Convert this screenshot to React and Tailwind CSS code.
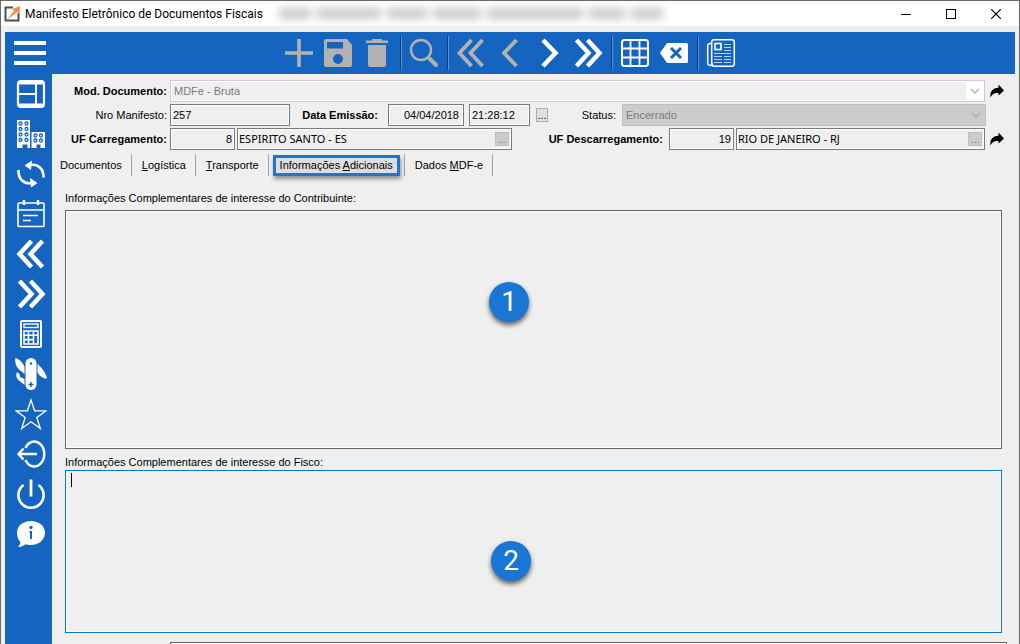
import { useState } from "react";
import clsx from "clsx";

const Icon = ({ children, className = "size-8" }) => (
  <svg viewBox="0 0 32 32" className={className} fill="none" stroke="currentColor" aria-hidden="true">
    {children}
  </svg>
);

const chevrons = {
  first: "M16.5 3 4.5 16l12 13M27.5 3l-12 13 12 13",
  prev: "M22.5 3 10 16l12.500 13",
  next: "M10 3l12.500 13L10 29",
  last: "M4.500 3l12 13-12 13M15.500 3l12 13-12 13",
};

const Chevron = ({ dir, width = 4.5 }) => (
  <Icon>
    <path d={chevrons[dir]} strokeWidth={width} />
  </Icon>
);

const toolbar = [
  {
    name: "Novo",
    off: true,
    icon: (
      <Icon>
        <path d="M16 2v28M2 16h28" strokeWidth="3.6" />
      </Icon>
    ),
  },
  {
    name: "Salvar",
    off: true,
    icon: (
      <Icon>
        <path
          d="M4 2h21l5 6v20a2 2 0 0 1-2 2H4a2 2 0 0 1-2-2V4a2 2 0 0 1 2-2zM5 5v6.500h16V5zM16 17a5 5 0 1 0 0 10 5 5 0 0 0 0-10z"
          fill="currentColor"
          fillRule="evenodd"
          stroke="none"
        />
      </Icon>
    ),
  },
  {
    name: "Excluir",
    off: true,
    icon: (
      <Icon>
        <path
          d="M11 2h10v1.500h6V6H5V3.500h6zM7 8h18v19.500a2.500 2.500 0 0 1-2.500 2.500h-13A2.500 2.500 0 0 1 7 27.500z"
          fill="currentColor"
          stroke="none"
        />
      </Icon>
    ),
  },
  null,
  {
    name: "Pesquisar",
    off: true,
    icon: (
      <Icon>
        <circle cx="13" cy="13" r="10" strokeWidth="2.4" />
        <path d="M20 20l2 2" strokeWidth="2.400" />
        <path d="M22 22l6 6" strokeWidth="4" strokeLinecap="round" />
      </Icon>
    ),
  },
  null,
  { name: "Primeiro", off: true, icon: <Chevron dir="first" width={3.8} /> },
  { name: "Anterior", off: true, icon: <Chevron dir="prev" width={3.8} /> },
  { name: "Próximo", icon: <Chevron dir="next" /> },
  { name: "Último", icon: <Chevron dir="last" /> },
  null,
  {
    name: "Grade",
    icon: (
      <Icon>
        <rect x="3" y="3" width="26" height="26" rx="2.500" strokeWidth="2" />
        <path d="M11.500 3v26M20.500 3v26M3 11.500h26M3 20.500h26" strokeWidth="1.800" />
      </Icon>
    ),
  },
  {
    name: "Limpar",
    icon: (
      <Icon>
        <path
          d="M10 6h18.500A1.500 1.500 0 0 1 30 7.500v17a1.500 1.500 0 0 1-1.500 1.500H10a2 2 0 0 1-1.500-.7L2 16l6.500-9.300A2 2 0 0 1 10 6z"
          fill="currentColor"
          stroke="none"
        />
        <path d="M13 11l10 10M23 11L13 21" stroke="#1565c0" strokeWidth="3" />
      </Icon>
    ),
  },
  null,
  {
    name: "Notícias",
    icon: (
      <Icon>
        <rect x="6.700" y="2.700" width="22.600" height="26.600" rx="2.500" strokeWidth="1.500" />
        <path d="M6.700 6.500H5A2.300 2.300 0 0 0 2.700 9v17.500a2.600 2.600 0 0 0 5 0" strokeWidth="1.500" />
        <rect x="10" y="6.500" width="6" height="6" strokeWidth="1.600" />
        <path
          d="M19 7.500h7M19 10.500h7M19 13.500h7M9 16.500h17M9 19.500h8M19 19.500h7M9 22.500h8M19 22.500h7M9 25.500h8M19 25.500h7"
          strokeWidth="1"
          opacity=".7"
        />
      </Icon>
    ),
  },
];

const sidebar = [
  {
    name: "Painel",
    icon: (
      <Icon>
        <rect x="3" y="3" width="26" height="26" rx="3" strokeWidth="2.200" />
        <path d="M21 5v22M4 16h17" strokeWidth="2" />
        <path d="M3 5h26" strokeWidth="3" />
        <path d="M4 27h24" strokeWidth="3" />
      </Icon>
    ),
  },
  {
    name: "Empresas",
    icon: (
      <Icon>
        <path
          d="M2 2h13v28h-2.500v-3.500h-5V30H2zM16.500 14H30v16h-4.500v-3.500h-4V30h-5z"
          fill="currentColor"
          stroke="none"
        />
        <g stroke="#1565c0" strokeWidth="1.300">
          {[5.5, 11, 16.5, 22].map((y) => (
            <g key={y}>
              <circle cx="5.500" cy={y} r="1.500" />
              <circle cx="11.500" cy={y} r="1.500" />
            </g>
          ))}
          {[17.5, 22.5].map((y) => (
            <g key={y}>
              <circle cx="20.500" cy={y} r="1.500" />
              <circle cx="26" cy={y} r="1.500" />
            </g>
          ))}
        </g>
      </Icon>
    ),
  },
  {
    name: "Atualizar",
    icon: (
      <Icon>
        <path d="M15 7C23 5.500 29 11 28.500 19.500M17 25C9 26.500 3 21 3.500 12" strokeWidth="2.600" />
        <path d="M9.500 7.500 17 2.500 16 12zM22.500 25 15 20l1 9.500z" fill="currentColor" stroke="none" />
      </Icon>
    ),
  },
  {
    name: "Agenda",
    icon: (
      <Icon>
        <rect x="3" y="5" width="26" height="23.500" rx="1" strokeWidth="1.600" />
        <path d="M3 12h26" strokeWidth="1.500" />
        <path d="M9 2v5M23 2v5" strokeWidth="2.400" />
        <path d="M8 17.500h15M8 22.500h8" strokeWidth="1.700" />
      </Icon>
    ),
  },
  { name: "Recuar", icon: <Chevron dir="first" /> },
  { name: "Avançar", icon: <Chevron dir="last" /> },
  {
    name: "Calculadora",
    icon: (
      <Icon>
        <rect x="6" y="3" width="20" height="26" rx="1" strokeWidth="2" />
        <rect x="9" y="6" width="14" height="3.500" strokeWidth="1.400" />
        <path d="M9 13h14v13H9zM13.500 13v13M18.500 13v13M9 17.300h14M9 21.600h9.500" strokeWidth="1.600" />
      </Icon>
    ),
  },
  {
    name: "Ferramentas",
    icon: (
      <Icon>
        <path
          d="M16 0a5.500 5.500 0 0 1 5.500 5.500v21a5.500 5.500 0 0 1-11 0v-21A5.500 5.500 0 0 1 16 0z"
          fill="currentColor"
          stroke="none"
        />
        <path
          d="M.5 0C4 1 8 4.500 9.500 9v7L4 11.500C1 8.500-.5 4 .5 0zM2 14l2.500 2 .5 3 4.500 2v6L4 22.500C1.500 20.500.5 17 2 14zM22.500 6c3.500 3 8.500 8.500 9.500 14.500-4 0-7-2-9.500-6z"
          fill="currentColor"
          stroke="none"
        />
        <circle cx="16" cy="5.500" r="1.200" fill="#1565c0" stroke="none" />
        <path d="M16 24v5M13.500 26.500h5" stroke="#1565c0" strokeWidth="1.500" />
      </Icon>
    ),
  },
  {
    name: "Favoritos",
    icon: (
      <Icon>
        <path d="M16 2l3.600 10.800H31L21.800 19.500 25.300 30.500 16 23.800 6.700 30.500l3.500-11L1 12.800h11.400z" strokeWidth="1.300" />
      </Icon>
    ),
  },
  {
    name: "Sair",
    icon: (
      <Icon>
        <path d="M10.500 10A10 12.500 0 1 1 10.500 22" strokeWidth="2.400" />
        <path d="M22 16H3.500M8.500 10.500 3.500 16l5 5.500" strokeWidth="2.400" />
      </Icon>
    ),
  },
  {
    name: "Desligar",
    icon: (
      <Icon>
        <path d="M8.500 7a12.600 12.600 0 1 0 15 0" strokeWidth="2.600" />
        <path d="M16 1.500v17" strokeWidth="2.800" />
      </Icon>
    ),
  },
  {
    name: "Informações",
    icon: (
      <Icon>
        <path
          d="M16 3c8 0 14 5 14 11.700S24 27 16 27c-2.300 0-4-.3-5.500-.8C8.500 27.800 6 29 3 29c1.500-1.500 2.500-3.500 2.300-5C3.200 21.500 2 18.500 2 14.700 2 8 8 3 16 3z"
          fill="currentColor"
          stroke="none"
        />
        <circle cx="16" cy="9.500" r="1.700" fill="#1565c0" stroke="none" />
        <path d="M14.500 14H16v7" stroke="#1565c0" strokeWidth="2" />
      </Icon>
    ),
  },
];

const tabs = [
  { id: "documentos", label: "Documentos" },
  { id: "logistica", label: <><u>L</u>ogística</> },
  { id: "transporte", label: <><u>T</u>ransporte</> },
  { id: "adicionais", label: <>Informações <u>A</u>dicionais</> },
  { id: "dados", label: <>Dados <u>M</u>DF-e</> },
];

// widths of the blurred words after the window title
const hidden = ["w-8", "w-16", "w-10", "w-12", "w-24", "w-9", "w-8"];

const fieldBase =
  "h-[22px] border border-[#7a7a7a] bg-[#efefef] shadow-[inset_0_0_0_1px_#fff] outline-none";

const Field = ({ id, label, value, className }) => (
  <input
    id={id}
    aria-label={label}
    defaultValue={value}
    className={clsx(fieldBase, "min-w-0 px-[2px]", className)}
  />
);

const Label = ({ htmlFor, bold, className, children }) => (
  <label
    htmlFor={htmlFor}
    className={clsx("shrink-0 whitespace-nowrap text-right", bold && "font-bold", className)}
  >
    {children}
  </label>
);

const Lookup = ({ id, label, value, className }) => (
  <div className={clsx(fieldBase, "flex min-w-0 items-center justify-between pr-[2px]", className)}>
    <input
      id={id}
      aria-label={label}
      defaultValue={value}
      className="w-full min-w-0 bg-transparent pl-px font-[Tahoma,'Noto_Sans',sans-serif] outline-none"
    />
    <button
      type="button"
      aria-label={`Buscar ${label}`}
      className="flex size-[14px] shrink-0 items-end justify-center border border-[#bfbfbf] bg-[#ccc] leading-[12px] text-gray-500"
    >
      ...
    </button>
  </div>
);

const SelectArrow = ({ className }) => (
  <span
    className={clsx("pointer-events-none absolute inset-y-px right-px flex w-[18px] items-center justify-center", className)}
  >
    <svg viewBox="0 0 10 6" className="h-[6px] w-[10px]" fill="none" stroke="#a9a9a9" aria-hidden="true">
      <path d="M1 1l4 4 4-4" strokeWidth="1.200" />
    </svg>
  </span>
);

const ShareLink = ({ label }) => (
  <a href="#abrir" aria-label={label} className="ml-[5px] w-[14px] shrink-0 text-black">
    <svg viewBox="0 0 14 14" className="size-[14px]" fill="currentColor" aria-hidden="true">
      <path d="M8.500 0.500 14 6.500 8.500 11.500V9C4.500 8.500 2 10 .5 13.500-.5 7.500 3 4 8.500 3.800z" />
    </svg>
  </a>
);

const Badge = ({ className, children }) => (
  <span
    className={clsx(
      "pointer-events-none absolute flex size-10 items-center justify-center rounded-full bg-[#1976d2] font-[Roboto,sans-serif] text-[28px] leading-none text-white shadow-[0_3px_5px_rgba(0,0,0,0.6)]",
      className
    )}
  >
    {children}
  </span>
);

const textArea =
  "block w-full resize-none border bg-[#efefef] px-[5px] py-[2px] shadow-[inset_0_0_0_1px_#fff] outline-none";

export default function App() {
  const [active, setActive] = useState("adicionais");

  return (
    <div className="flex h-screen flex-col overflow-hidden border-x border-t border-[#696969] bg-[#efefef] font-['Liberation_Sans',Arial,sans-serif] text-[11px] leading-[14px] text-black">
      {/* Title bar */}
      <header className="flex h-[25px] shrink-0 items-center bg-white pl-[3px]">
        <svg viewBox="0 0 16 16" className="size-4" fill="none" aria-hidden="true">
          <path d="M9 1.500H1.500v13h13V7" stroke="#505050" strokeWidth="2" />
          <path d="M2.500 14 10 5 8.500 3 16 0l-.5 7.500L13.500 6z" fill="#f58d45" />
        </svg>
        <h1 className="ml-[5px] whitespace-nowrap font-['Segoe_UI',Roboto,sans-serif] text-[12px] leading-4">
          Manifesto Eletrônico de Documentos Fiscais
        </h1>
        <div className="ml-4 flex flex-1 gap-[6px] blur-[4px]" aria-hidden="true">
          {hidden.map((w, i) => (
            <span key={i} className={clsx("h-[11px] shrink-0 bg-[#ccc9cb]", w)} />
          ))}
        </div>
        <button type="button" aria-label="Minimizar" className="flex w-[45px] justify-center">
          <svg viewBox="0 0 10 10" className="size-[10px]" stroke="#000" fill="none">
            <path d="M0 5.500h10" />
          </svg>
        </button>
        <button type="button" aria-label="Maximizar" className="flex w-[45px] justify-center">
          <svg viewBox="0 0 10 10" className="size-[10px]" stroke="#000" fill="none">
            <rect x=".5" y=".5" width="9" height="9" />
          </svg>
        </button>
        <button type="button" aria-label="Fechar" className="flex w-[46px] justify-center">
          <svg viewBox="0 0 10 10" className="size-[10px]" stroke="#000" fill="none">
            <path d="M0 0l10 10M10 0 0 10" strokeWidth="1.200" />
          </svg>
        </button>
      </header>

      {/* Toolbar */}
      <div className="mx-1 mt-[6px] flex h-[42px] shrink-0 items-center bg-[#1565c0] px-[9px] text-white">
        <div className="flex-1">
          <button type="button" aria-label="Menu" className="flex w-8 flex-col gap-[6px]">
            <span className="h-1 w-full bg-white" />
            <span className="h-1 w-full bg-white" />
            <span className="h-1 w-full bg-white" />
          </button>
        </div>
        <div className="flex items-center">
          {toolbar.map((tool, i) =>
            tool ? (
              <button
                key={i}
                type="button"
                aria-label={tool.name}
                className={clsx("flex w-[39px] justify-center", tool.off && "text-[#b2b2b2]")}
              >
                {tool.icon}
              </button>
            ) : (
              <span key={i} className="mx-[3px] h-[34px] w-[2px] border-l border-r border-l-[#0c3c73] border-r-[#5b93d3]" />
            )
          )}
        </div>
        <div className="flex-1" />
      </div>

      <div className="flex min-h-0 flex-1">
        <nav className="ml-1 w-[47px] shrink-0 bg-[#1565c0] text-white">
          {sidebar.map((item) => (
            <button
              key={item.name}
              type="button"
              aria-label={item.name}
              className="flex h-10 w-full items-center pl-[10px]"
            >
              {item.icon}
            </button>
          ))}
        </nav>

        <main className="flex min-w-0 flex-1 flex-col pt-[6px]">
          <form className="flex flex-col gap-[2px] pr-[15px]">
            <div className="flex items-center">
              <Label htmlFor="modelo" bold className="w-[115px]">Mod. Documento:</Label>
              <div className="relative ml-[3px] min-w-0 flex-1">
                <select
                  id="modelo"
                  disabled
                  className="block h-[22px] w-full appearance-none border border-[#ccc] bg-[#efefef] px-[3px] text-[#7a7a7a] opacity-100 shadow-[inset_0_0_0_1px_#fff]"
                >
                  <option>MDFe - Bruta</option>
                </select>
                <SelectArrow className="bg-white" />
              </div>
              <ShareLink label="Abrir documento" />
            </div>

            <div className="flex items-center">
              <Label htmlFor="numero" className="w-[115px]">Nro Manifesto:</Label>
              <Field id="numero" value="257" className="ml-[3px] w-[120px]" />
              <Label htmlFor="data" bold className="w-[88px]">Data Emissão:</Label>
              <Field id="data" value="04/04/2018" className="ml-[10px] w-[76px] pr-1 text-right" />
              <Field id="hora" label="Hora" value="21:28:12" className="ml-[5px] w-[61px]" />
              <button
                type="button"
                aria-label="Escolher data"
                className="ml-[6px] flex h-[14px] w-3 shrink-0 items-end justify-center border border-[#adadad] bg-[#e1e1e1] leading-[12px]"
              >
                ...
              </button>
              <Label htmlFor="status" className="w-[68px]">Status:</Label>
              <div className="relative ml-[6px] mr-[18px] min-w-0 flex-1">
                <select
                  id="status"
                  disabled
                  className="block h-[22px] w-full appearance-none border border-[#bfbfbf] bg-[#ccc] px-[3px] text-[#7a7a7a] opacity-100"
                >
                  <option>Encerrado</option>
                </select>
                <SelectArrow />
              </div>
            </div>

            <div className="flex items-center">
              <Label htmlFor="ufCarga" bold className="w-[115px]">UF Carregamento:</Label>
              <Field id="ufCarga" value="8" className="ml-[3px] w-[65px] text-right" />
              <Lookup label="Estado de carregamento" value="ESPIRITO SANTO - ES" className="ml-[2px] w-[275px]" />
              <Label htmlFor="ufDescarga" bold className="w-[151px]">UF Descarregamento:</Label>
              <Field id="ufDescarga" value="19" className="ml-[6px] w-[65px] text-right" />
              <Lookup label="Estado de descarregamento" value="RIO DE JANEIRO - RJ" className="ml-[2px] flex-1" />
              <ShareLink label="Abrir estado" />
            </div>
          </form>

          <div role="tablist" className="mt-1 flex">
            {tabs.map((tab) => (
              <button
                key={tab.id}
                type="button"
                role="tab"
                aria-selected={active === tab.id}
                onClick={() => setActive(tab.id)}
                className={clsx(
                  "flex h-[22px] items-center whitespace-nowrap border-r border-[#a0a0a0]",
                  active === tab.id ? "px-1" : "pl-[10px] pr-[9px] first:pl-2"
                )}
              >
                {active === tab.id ? (
                  <span className="flex h-[21px] items-center border-[3px] border-[#1976d2] bg-[#dedede] px-1 shadow-[1px_3px_4px_rgba(0,0,0,0.4)]">
                    <span>{tab.label}</span>
                  </span>
                ) : (
                  <span>{tab.label}</span>
                )}
              </button>
            ))}
          </div>

          <section className="mt-[15px] flex min-h-0 flex-1 flex-col pl-[13px] pr-[17px]">
            <label htmlFor="contribuinte">Informações Complementares de interesse do Contribuinte:</label>
            <div className="relative mt-[5px] min-h-0 flex-1">
              <textarea id="contribuinte" className={clsx(textArea, "h-full border-[#646464]")} />
              <Badge className="left-[424px] top-[72px]">1</Badge>
            </div>
            <label htmlFor="fisco" className="mb-px mt-[6px]">Informações Complementares de interesse do Fisco:</label>
            <div className="relative h-[163px] shrink-0">
              <textarea id="fisco" className={clsx(textArea, "h-full border-[#0078d7]")} />
              <span className="absolute left-[6px] top-[3px] h-[14px] w-px bg-black" />
              <Badge className="left-[426px] top-[71px]">2</Badge>
            </div>
          </section>
          <div className="ml-[118px] mr-3 mt-[9px] h-[2px] shrink-0 border-x border-t border-[#646464] bg-white" />
        </main>
      </div>
    </div>
  );
}
